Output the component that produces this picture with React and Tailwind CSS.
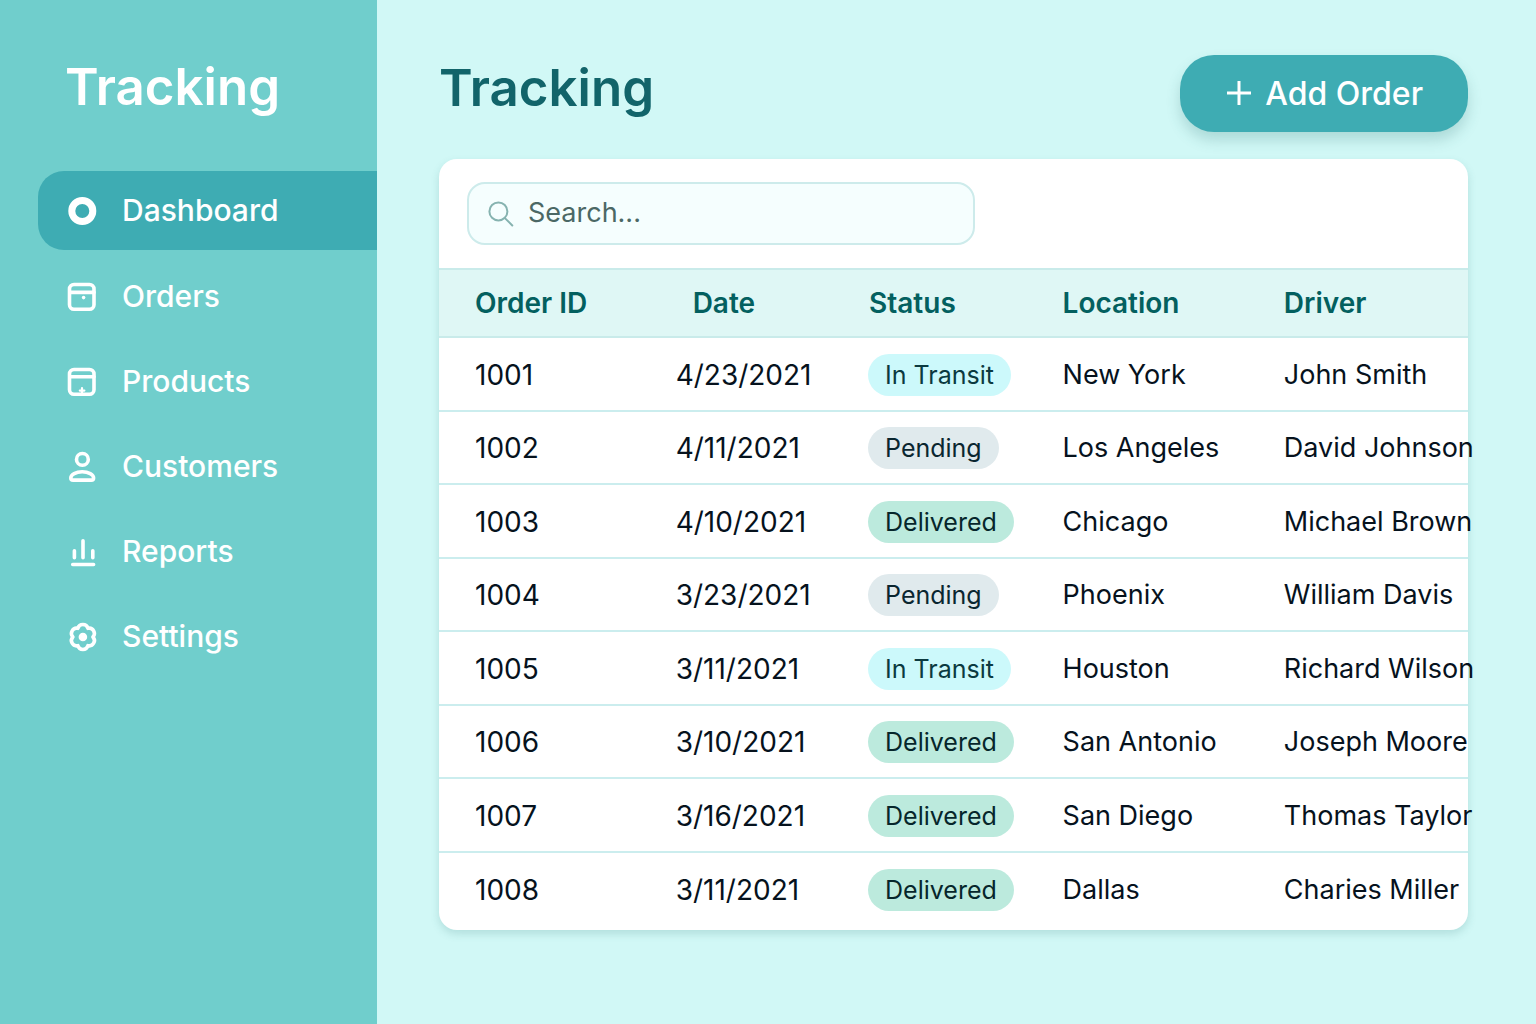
const nav = [
  ["Dashboard", <circle cx="16.3" cy="16" r="10.5" strokeWidth="7" />],
  ["Orders", <><rect x="3.5" y="3.5" width="24.500" height="24.800" rx="4.500" /><path d="M4 11.400h24" /><circle cx="17.600" cy="16.600" r="1.800" fill="currentColor" stroke="none" /></>],
  ["Products", <><rect x="3.5" y="3.5" width="24.500" height="24.800" rx="4.500" /><path d="M4 10.800h24" /><path d="M16 22v6M13.800 24.600h4.600" strokeWidth="2.200" /></>],
  ["Customers", <><circle cx="16.400" cy="8.400" r="5.900" /><path d="M16.200 20.800c6.200 0 11.400 2.600 11.400 6.200 0 1.300-.8 2.100-2.300 2.100H7.100c-1.500 0-2.300-.8-2.300-2.100C4.800 23.400 10 20.800 16.200 20.800z" /></>],
  ["Reports", <path d="M8.400 14.700v7M17 4.700v17M26.800 14.700v7M6.700 28.500h20.900" />],
  ["Settings", <><path d="M26.900 16A5.200 5.200 0 0 1 21.900 24.660A5.200 5.200 0 0 1 11.900 24.660A5.200 5.200 0 0 1 6.900 16A5.200 5.200 0 0 1 11.900 7.340A5.200 5.200 0 0 1 21.900 7.340A5.200 5.200 0 0 1 26.900 16z" /><circle cx="16.900" cy="16" r="4.300" fill="currentColor" stroke="none" /></>],
];

const columns = [
  ["Order ID", "pl-9"],
  ["Date", "pl-[53px]"],
  ["Status", "pl-[37px]"],
  ["Location", "pl-[35px]"],
  ["Driver", "pl-[35px]"],
];

const orders = [
  ["1001", "4/23/2021", "In Transit", "New York", "John Smith"],
  ["1002", "4/11/2021", "Pending", "Los Angeles", "David Johnson"],
  ["1003", "4/10/2021", "Delivered", "Chicago", "Michael Brown"],
  ["1004", "3/23/2021", "Pending", "Phoenix", "William Davis"],
  ["1005", "3/11/2021", "In Transit", "Houston", "Richard Wilson"],
  ["1006", "3/10/2021", "Delivered", "San Antonio", "Joseph Moore"],
  ["1007", "3/16/2021", "Delivered", "San Diego", "Thomas Taylor"],
  ["1008", "3/11/2021", "Delivered", "Dallas", "Charies Miller"],
];

const tones = {
  "In Transit": "bg-[#ccf9fb] text-[#0b3a40]",
  Pending: "bg-[#e0eaed] text-[#0a2630]",
  Delivered: "bg-[#bceadd] text-[#06262b]",
};

export default function App() {
  return (
    <div className="flex min-h-screen bg-[#d1f8f6] font-['Inter',sans-serif] text-[#06121d]">
      <aside className="w-[377px] shrink-0 bg-[#70cecc] pt-[52px] pl-[38px] text-white">
        <div className="pl-[27px] text-[51px] leading-[70px] font-semibold">Tracking</div>
        <nav className="mt-[49px] flex flex-col gap-[6px]">
          {nav.map(([label, icon], i) => (
            <a
              key={label}
              href="#"
              aria-current={i === 0 ? "page" : undefined}
              className={`flex h-[79px] items-center gap-6 rounded-l-[26px] pl-7 text-[30px] font-medium ${i === 0 ? "mb-px bg-[#3eacb3]" : ""}`}
            >
              <svg viewBox="0 0 32 32" className="size-8 shrink-0" fill="none" stroke="currentColor" strokeWidth="3.6" strokeLinecap="round" strokeLinejoin="round" aria-hidden="true">
                {icon}
              </svg>
              {label}
            </a>
          ))}
        </nav>
      </aside>

      <main className="min-w-0 flex-1 pt-[55px] pr-[68px] pl-[62px]">
        <header className="flex items-start justify-between">
          <h1 className="text-[51px] leading-[66px] font-semibold text-[#12646a]">Tracking</h1>
          <button type="button" className="flex h-[77px] items-center gap-[14px] rounded-[34px] bg-[#3eacb3] px-[45px] text-[32px] font-medium text-white shadow-[0_8px_14px_rgba(40,110,110,0.22)]">
            <svg viewBox="0 0 26 26" className="size-[26px]" stroke="currentColor" strokeWidth="3" aria-hidden="true">
              <path d="M14 0v24M2 12h24" />
            </svg>
            Add Order
          </button>
        </header>

        <section className="mt-[27px] rounded-[18px] bg-white pb-[5px] shadow-[0_4px_8px_rgba(40,110,110,0.18)]">
          <div className="px-7 py-[23px]">
            <label className="flex h-[63px] w-full max-w-[508px] items-center gap-[14px] rounded-[18px] border-2 border-[#cdebeb] bg-[#f5fefe] px-[19px]">
              <svg viewBox="0 0 26 26" className="size-[26px] shrink-0 text-[#86b3b0]" fill="none" stroke="currentColor" strokeWidth="2" strokeLinecap="round" aria-hidden="true">
                <circle cx="10.400" cy="10.400" r="9" />
                <path d="M16.900 17.100l7.400 7.400" />
              </svg>
              <input type="text" aria-label="Search orders" placeholder="Search..." className="min-w-0 flex-1 bg-transparent text-[27px] outline-none placeholder:text-[#4b6865]" />
            </label>
          </div>

          <table className="w-full table-fixed border-collapse text-left text-[28px] whitespace-nowrap">
            <colgroup>
              <col className="w-[19.5%]" />
              <col className="w-[18.7%]" />
              <col className="w-[19%]" />
              <col className="w-[21.5%]" />
              <col />
            </colgroup>
            <thead>
              <tr className="h-[68px] border-y-2 border-[#c9ebea] bg-[#dff7f5] text-[#03605f]">
                {columns.map(([name, pad]) => (
                  <th key={name} scope="col" className={`font-semibold ${pad}`}>{name}</th>
                ))}
              </tr>
            </thead>
            <tbody>
              {orders.map(([id, date, status, location, driver]) => (
                <tr key={id} className="h-[74px] border-b-2 border-[#cbedee] last:border-0 even:h-[73px]">
                  <td className="pt-px pl-9">{id}</td>
                  <td className="pt-px pl-9">{date}</td>
                  <td className="pt-px pl-9">
                    <span className={`flex h-[42px] w-fit items-center rounded-full px-[17px] pt-[2px] text-[25px] ${tones[status]}`}>{status}</span>
                  </td>
                  <td className="pt-[2px] pl-[35px] text-[27px]">{location}</td>
                  <td className="pt-[2px] pl-[35px] text-[27px]">{driver}</td>
                </tr>
              ))}
            </tbody>
          </table>
        </section>
      </main>
    </div>
  );
}
